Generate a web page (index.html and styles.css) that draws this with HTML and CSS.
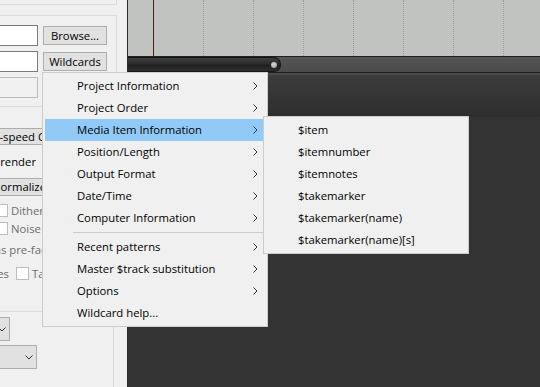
FILE: index.html
```html
<!DOCTYPE html>
<html lang="en">
<head>
  <meta charset="UTF-8">
  <title>Render - Wildcards menu</title>
  <link rel="stylesheet" href="styles.css">
</head>
<body>
  <div class="window">
    <div class="panel">
      <div class="group-top"></div>
      <div class="group-file">
        <div class="file-row">
          <div class="field"></div>
          <div class="btn">Browse...</div>
        </div>
        <div class="file-row">
          <div class="field"></div>
          <div class="btn">Wildcards</div>
        </div>
        <div class="file-row">
          <div class="field field-off"></div>
        </div>
      </div>

      <div class="combo-speed">Full-speed Offline</div>
      <div class="cut cut-render"><span>2nd pass render</span></div>
      <div class="btn-normalize">Normalize/Limit...</div>
      <div class="check-row check-dither">
        <span class="check"></span><span class="dim">Dither master</span>
      </div>
      <div class="check-row check-noise">
        <span class="check"></span><span class="dim">Noise shape master</span>
      </div>
      <div class="cut-stems"><span class="dim">Stems pre-fader</span></div>
      <div class="check-row check-tail">
        <div class="cut cut-files"><span class="dim">Silently increment filenames</span></div>
        <span class="check"></span><span class="dim">Tail</span>
      </div>

      <div class="group-end">
        <div class="combo combo-small">
          <svg width="8" height="5" viewBox="0 0 8 5"><polyline points="0.5,0.5 4,4 7.5,0.5" fill="none" stroke="#333" stroke-width="1"/></svg>
        </div>
        <div class="combo combo-wide">
          <svg width="8" height="5" viewBox="0 0 8 5"><polyline points="0.5,0.5 4,4 7.5,0.5" fill="none" stroke="#333" stroke-width="1"/></svg>
        </div>
      </div>
    </div>

    <div class="arrange">
      <div class="timeline">
        <div class="tick tick-first"><div class="cursor"></div></div>
        <div class="tick"></div>
        <div class="tick"></div>
        <div class="tick"></div>
        <div class="tick"></div>
        <div class="tick"></div>
        <div class="tick"></div>
        <div class="tick"></div>
      </div>
      <div class="scroll">
        <div class="thumb"><span class="knob"></span></div>
      </div>
      <div class="ruler-edge"></div>
      <div class="ruler"></div>
      <div class="tracks"></div>
    </div>
  </div>

  <div class="menu menu-main">
    <div class="item"><span class="label">Project Information</span>
      <svg width="5" height="8" viewBox="0 0 5 8"><polyline points="0.5,0.5 4,4 0.5,7.5" fill="none" stroke="#333" stroke-width="1"/></svg></div>
    <div class="item"><span class="label">Project Order</span>
      <svg width="5" height="8" viewBox="0 0 5 8"><polyline points="0.5,0.5 4,4 0.5,7.5" fill="none" stroke="#333" stroke-width="1"/></svg></div>
    <div class="item hot"><span class="label">Media Item Information</span>
      <svg width="5" height="8" viewBox="0 0 5 8"><polyline points="0.5,0.5 4,4 0.5,7.5" fill="none" stroke="#333" stroke-width="1"/></svg></div>
    <div class="item"><span class="label">Position/Length</span>
      <svg width="5" height="8" viewBox="0 0 5 8"><polyline points="0.5,0.5 4,4 0.5,7.5" fill="none" stroke="#333" stroke-width="1"/></svg></div>
    <div class="item"><span class="label">Output Format</span>
      <svg width="5" height="8" viewBox="0 0 5 8"><polyline points="0.5,0.5 4,4 0.5,7.5" fill="none" stroke="#333" stroke-width="1"/></svg></div>
    <div class="item"><span class="label">Date/Time</span>
      <svg width="5" height="8" viewBox="0 0 5 8"><polyline points="0.5,0.5 4,4 0.5,7.5" fill="none" stroke="#333" stroke-width="1"/></svg></div>
    <div class="item"><span class="label">Computer Information</span>
      <svg width="5" height="8" viewBox="0 0 5 8"><polyline points="0.5,0.5 4,4 0.5,7.5" fill="none" stroke="#333" stroke-width="1"/></svg></div>
    <div class="sep"></div>
    <div class="item"><span class="label">Recent patterns</span>
      <svg width="5" height="8" viewBox="0 0 5 8"><polyline points="0.5,0.5 4,4 0.5,7.5" fill="none" stroke="#333" stroke-width="1"/></svg></div>
    <div class="item"><span class="label">Master $track substitution</span>
      <svg width="5" height="8" viewBox="0 0 5 8"><polyline points="0.5,0.5 4,4 0.5,7.5" fill="none" stroke="#333" stroke-width="1"/></svg></div>
    <div class="item"><span class="label">Options</span>
      <svg width="5" height="8" viewBox="0 0 5 8"><polyline points="0.5,0.5 4,4 0.5,7.5" fill="none" stroke="#333" stroke-width="1"/></svg></div>
    <div class="item"><span class="label">Wildcard help...</span></div>
  </div>

  <div class="menu menu-sub">
    <div class="item"><span class="label">$item</span></div>
    <div class="item"><span class="label">$itemnumber</span></div>
    <div class="item"><span class="label">$itemnotes</span></div>
    <div class="item"><span class="label">$takemarker</span></div>
    <div class="item"><span class="label">$takemarker(name)</span></div>
    <div class="item"><span class="label">$takemarker(name)[s]</span></div>
  </div>
</body>
</html>
```

FILE: styles.css
```css
body {
  margin: 0;
  background: #333;
  font-family: "Open Sans", "Noto Sans", sans-serif;
  font-size: 11.3px;
  color: #000;
  overflow: hidden;
}
.window {
  display: flex;
  height: 387px;
}

/* left side: render dialog */
.panel {
  width: 127px;
  flex: none;
  background: #f0f0f0;
  overflow: hidden;
  white-space: nowrap;
}
.group-top {
  width: 116px;
  height: 4px;
  border-right: 1px solid #dcdcdc;
  border-bottom: 1px solid #dcdcdc;
}
.group-file {
  margin-top: 10px;
  width: 117px;
  height: 92px;
  box-sizing: border-box;
  padding-top: 9px;
  border: 1px solid #dcdcdc;
  border-left: none;
}
.file-row {
  display: flex;
  align-items: center;
  height: 21px;
  margin-bottom: 5px;
}
.field {
  width: 38px;
  height: 21px;
  box-sizing: border-box;
  background: #fff;
  border: 1px solid #7a7a7a;
  border-left: none;
}
.field-off {
  background: #f0f0f0;
  border-color: #bcbcbc;
}
.btn {
  margin-left: 5px;
  width: 64px;
  height: 19px;
  box-sizing: border-box;
  background: #e1e1e1;
  border: 1px solid #adadad;
  display: flex;
  align-items: center;
  justify-content: center;
}
.combo-speed {
  margin: 21px 0 0 -21px;
  width: 70px;
  height: 17px;
  box-sizing: border-box;
  padding-left: 1px;
  line-height: 15px;
  background: #e1e1e1;
  border: 1px solid #adadad;
  overflow: hidden;
}
.cut {
  display: flex;
  justify-content: flex-end;
  overflow: hidden;
}
.cut-render {
  width: 36px;
  margin-top: 9px;
  line-height: 16px;
}
.btn-normalize {
  margin: 8px 0 0 -30px;
  width: 80px;
  height: 18px;
  box-sizing: border-box;
  padding-left: 21px;
  line-height: 16px;
  background: #e1e1e1;
  border: 1px solid #adadad;
  overflow: hidden;
}
.check-row {
  display: flex;
  align-items: center;
  height: 13px;
}
.check-dither { margin-top: 8px; }
.check-noise { margin-top: 5px; }
.check-tail { margin-top: 9px; }
.check {
  flex: none;
  width: 13px;
  height: 13px;
  box-sizing: border-box;
  background: #fff;
  border: 1px solid #bcbcbc;
  margin: 0 3px 0 -5px;
}
.check-tail .check {
  margin: 0 3px 0 7px;
}
.dim {
  color: #6d6d6d;
}
.cut-stems {
  margin: 7px 0 0 -26px;
  line-height: 16px;
}
.cut-files {
  width: 9px;
  flex: none;
  line-height: 16px;
}
.group-end {
  margin-top: 31px;
  width: 114px;
  height: 80px;
  box-sizing: border-box;
  padding-top: 5px;
  border-top: 1px solid #dcdcdc;
  border-right: 1px solid #dcdcdc;
}
.combo {
  height: 24px;
  box-sizing: border-box;
  margin-left: -20px;
  background: #e1e1e1;
  border: 1px solid #adadad;
  display: flex;
  align-items: center;
  justify-content: flex-end;
  padding-right: 3px;
}
.combo-small { width: 30px; margin-bottom: 4px; }
.combo-wide { width: 57px; }

/* right side: arrange view */
.arrange {
  flex: 1;
  border-left: 1px solid #2b2b2b;
  display: flex;
  flex-direction: column;
  overflow: hidden;
}
.timeline {
  height: 56px;
  flex: none;
  background: #c1c3c0;
  display: flex;
  overflow: hidden;
}
.tick {
  flex: none;
  width: 50px;
  box-sizing: border-box;
  border-right: 1px dotted #9a9c99;
}
.tick-first {
  width: 76px;
}
.cursor {
  margin-left: 25px;
  width: 1px;
  height: 100%;
  background: #5e1818;
}
.scroll {
  height: 16px;
  flex: none;
  box-sizing: border-box;
  border-top: 1px solid #1f1f1f;
  background: linear-gradient(#565656, #4a4a4a);
  display: flex;
}
.thumb {
  width: 153px;
  height: 15px;
  box-sizing: border-box;
  border: 1px solid #161616;
  border-left: none;
  border-radius: 0 7px 7px 0;
  background: linear-gradient(#3e3e3e, #2b2b2b 45%, #202020 55%, #2e2e2e);
  display: flex;
  align-items: center;
  justify-content: flex-end;
  padding-right: 3px;
}
.knob {
  width: 6px;
  height: 6px;
  border-radius: 50%;
  background: radial-gradient(circle at 40% 35%, #dadada, #8c8c8c);
}
.ruler-edge {
  height: 3px;
  flex: none;
  box-sizing: border-box;
  border-top: 1px solid #202020;
  background: #4a4a4a;
}
.ruler {
  height: 42px;
  flex: none;
  background: linear-gradient(#3c3c3c, #2e2e2e);
}
.tracks {
  flex: 1;
  background: #333;
}

/* popup menus */
.menu {
  position: absolute;
  box-sizing: border-box;
  background: #f0f0f0;
  border: 1px solid #cccccc;
  padding: 2px;
}
.menu-main {
  left: 42px;
  top: 72px;
  width: 226px;
}
.menu-sub {
  left: 263px;
  top: 116px;
  width: 206px;
}
.item {
  height: 22px;
  box-sizing: border-box;
  display: flex;
  align-items: center;
  padding: 0 7px 1px 32px;
  white-space: nowrap;
}
.item .label {
  flex: 1;
}
.item svg {
  margin-top: 1px;
}
.item.hot {
  background: #91c9f7;
}
.sep {
  height: 7px;
  box-sizing: border-box;
  padding: 3px 0 0 28px;
}
.sep::before {
  content: "";
  display: block;
  border-top: 1px solid #cccccc;
}
```
